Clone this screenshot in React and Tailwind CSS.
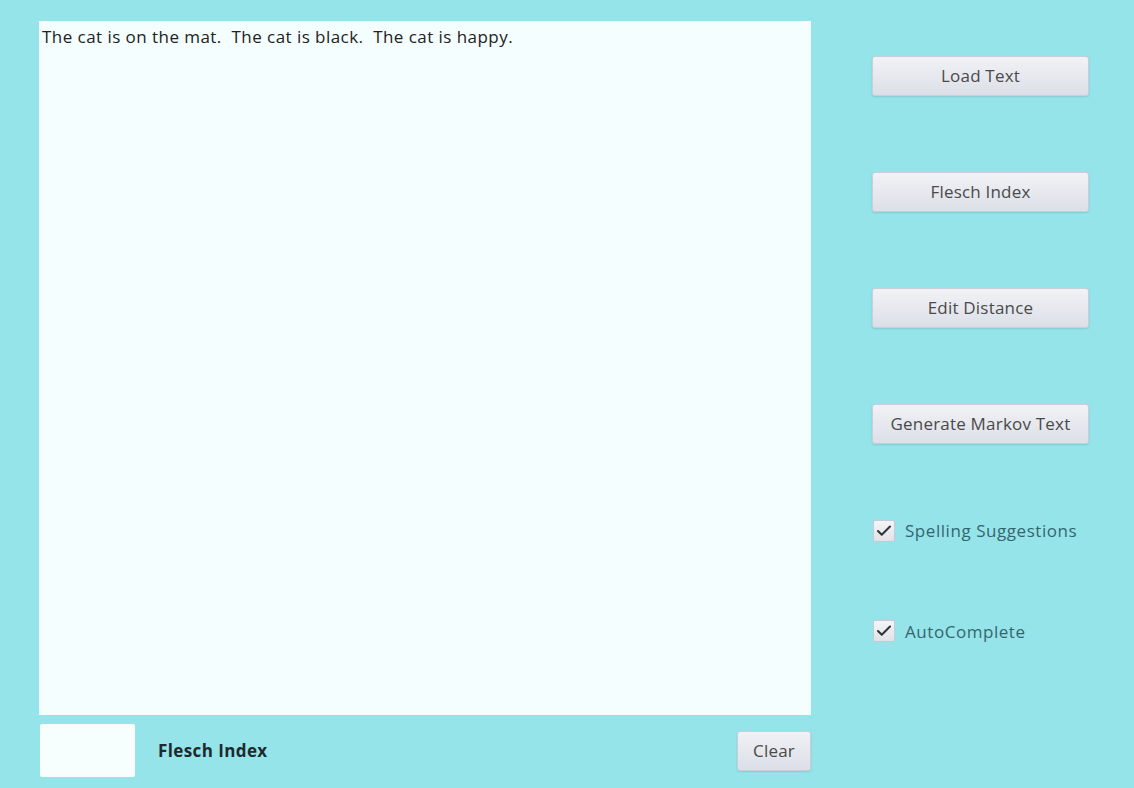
import { Check } from 'lucide-react'

const BUTTONS = ['Load Text', 'Flesch Index', 'Edit Distance', 'Generate Markov Text']
const OPTIONS = ['Spelling Suggestions', 'AutoComplete']

function FxButton({ label, className = '' }) {
  return (
    <button
      className={`flex items-center justify-center rounded-[3px] border border-[#c9ced8] bg-gradient-to-b from-[#f1f2f6] to-[#dcdfe7] text-[17px] tracking-[0.2px] text-[#4a4a4a] shadow-[0_1px_2px_rgba(0,0,0,0.12)] ${className}`}
    >
      {label}
    </button>
  )
}

export default function App() {
  return (
    <div
      className="flex w-[1134px] h-[788px] bg-[#95e4ea] overflow-hidden"
      style={{ fontFamily: '"Open Sans", "Noto Sans", sans-serif' }}
    >
      {/* Left: editor + status row */}
      <div className="flex flex-col pl-[39px] pt-[21px] w-[811px]">
        <div className="h-[694px] bg-[#f5fefe] px-[3px] pt-[4px]">
          <p className="whitespace-pre text-[17px] leading-[24px] text-[#222] tracking-[0.45px]">
            The cat is on the mat.  The cat is black.  The cat is happy.
          </p>
        </div>
        <div className="flex items-start mt-[9px]">
          <div className="w-[95px] h-[53px] bg-[#f7fefe] rounded-[2px] ml-[1px]" />
          <span className="ml-[23px] mt-[14px] text-[17px] tracking-[0.4px] font-bold text-[#1e2a2c]">Flesch Index</span>
          <FxButton label="Clear" className="ml-auto mt-[7px] w-[74px] h-[40px]" />
        </div>
      </div>

      {/* Right: actions */}
      <div className="flex flex-col ml-[61px] pt-[56px] w-[217px]">
        <div className="flex flex-col gap-[76px]">
          {BUTTONS.map((b) => (
            <FxButton key={b} label={b} className="w-[217px] h-[40px]" />
          ))}
        </div>
        <div className="flex flex-col gap-[75px] mt-[74px] ml-[1px]">
          {OPTIONS.map((o) => (
            <label key={o} className="flex items-center gap-[10px]">
              <span className="flex items-center justify-center w-[22px] h-[22px] rounded-[2px] border border-[#c5cad3] bg-gradient-to-b from-[#f4f5f8] to-[#dfe2e8]">
                <Check size={18} strokeWidth={2.75} className="text-[#333]" />
              </span>
              <span className="text-[17px] tracking-[0.55px] text-[#36666d]">{o}</span>
            </label>
          ))}
        </div>
      </div>
    </div>
  )
}
